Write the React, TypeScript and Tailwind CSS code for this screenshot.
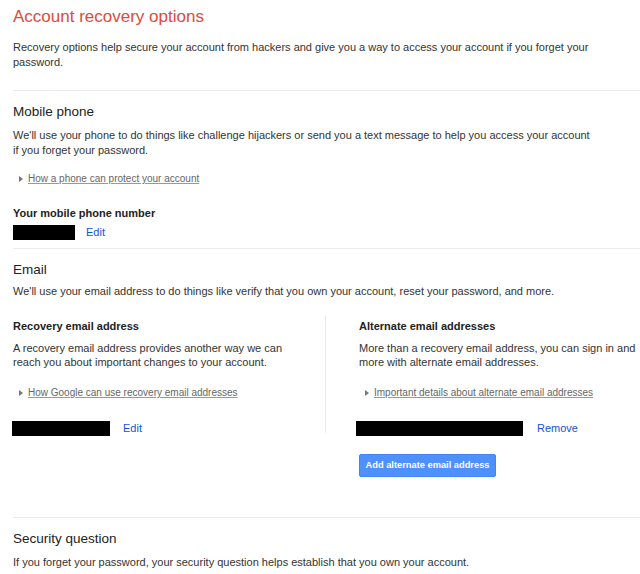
import React from "react";

function Tri() {
  return (
    <svg width="4" height="6" viewBox="0 0 4 6" className="shrink-0">
      <polygon points="0,0 4,3 0,6" fill="#777" />
    </svg>
  );
}

function MoreLink({ children, className = "" }: { children: React.ReactNode; className?: string }) {
  return (
    <div className={"flex items-center gap-[5px] pl-[6px] text-[10px] leading-[14px] " + className}>
      <Tri />
      <a className="text-[#666] underline decoration-[#999] underline-offset-[1px]">{children}</a>
    </div>
  );
}

function Redacted({ w }: { w: string }) {
  return <div className={"h-[15px] shrink-0 bg-black " + w} />;
}

export default function App() {
  return (
    <div
      className="w-[640px] h-[574px] overflow-hidden bg-white pl-[13px] text-[11px] text-[#333]"
      style={{ fontFamily: '"Liberation Sans", Arial, sans-serif' }}
    >
      <h1 className="pt-[7px] text-[17px] leading-[20px] text-[#dd4b39]">Account recovery options</h1>
      <p className="mt-[13px] leading-[15px] pr-[40px]">
        Recovery options help secure your account from hackers and give you a way to access your account if you forget your
        password.
      </p>

      <div className="mt-[20px] border-t border-[#ebebeb]">
        <h2 className="mt-[12px] text-[13.5px] leading-[17px] text-[#222]">Mobile phone</h2>
        <p className="mt-[8px] leading-[15px] pr-[50px]">
          We'll use your phone to do things like challenge hijackers or send you a text message to help you access your account
          if you forget your password.
        </p>
        <MoreLink className="mt-[14px]">How a phone can protect your account</MoreLink>
        <div className="mt-[20px] font-bold leading-[15px] text-[#222]">Your mobile phone number</div>
        <div className="mt-[4px] flex items-center">
          <Redacted w="w-[62px]" />
          <a className="ml-[11px] leading-[15px] text-[#1155cc]">Edit</a>
        </div>
      </div>

      <div className="mt-[8px] border-t border-[#ebebeb]">
        <h2 className="mt-[12px] text-[13.5px] leading-[17px] text-[#222]">Email</h2>
        <p className="mt-[6px] leading-[15px]">
          We'll use your email address to do things like verify that you own your account, reset your password, and more.
        </p>
        <div className="mt-[17px] flex items-start">
          <div className="w-[313px] shrink-0 border-r border-[#ebebeb] pt-[3px]">
            <div className="font-bold leading-[15px] text-[#222]">Recovery email address</div>
            <p className="mt-[7px] leading-[14px] pr-[28px]">
              A recovery email address provides another way we can reach you about important changes to your account.
            </p>
            <MoreLink className="mt-[17px]">How Google can use recovery email addresses</MoreLink>
            <div className="mt-[21px] -mb-[3px] flex items-center -ml-[1px]">
              <Redacted w="w-[98px]" />
              <a className="ml-[13px] leading-[15px] text-[#1155cc]">Edit</a>
            </div>
          </div>
          <div className="w-[314px] shrink-0 pl-[33px] pt-[3px]">
            <div className="font-bold leading-[15px] text-[#222]">Alternate email addresses</div>
            <p className="mt-[7px] leading-[14px]">
              More than a recovery email address, you can sign in and more with alternate email addresses.
            </p>
            <MoreLink className="mt-[17px]">Important details about alternate email addresses</MoreLink>
            <div className="mt-[21px] flex items-center -ml-[3px]">
              <Redacted w="w-[167px]" />
              <a className="ml-[14px] leading-[15px] text-[#1155cc]">Remove</a>
            </div>
            <button className="mt-[18px] h-[23px] w-[137px] rounded-[2px] border border-[#3f86f5] bg-[#4d90fe] text-[9.3px] font-bold text-white">
              Add alternate email address
            </button>
          </div>
        </div>
      </div>

      <div className="mt-[40px] border-t border-[#ebebeb]">
        <h2 className="mt-[12px] text-[13.5px] leading-[17px] text-[#222]">Security question</h2>
        <p className="mt-[8px] leading-[15px]">
          If you forget your password, your security question helps establish that you own your account.
        </p>
      </div>
    </div>
  );
}
